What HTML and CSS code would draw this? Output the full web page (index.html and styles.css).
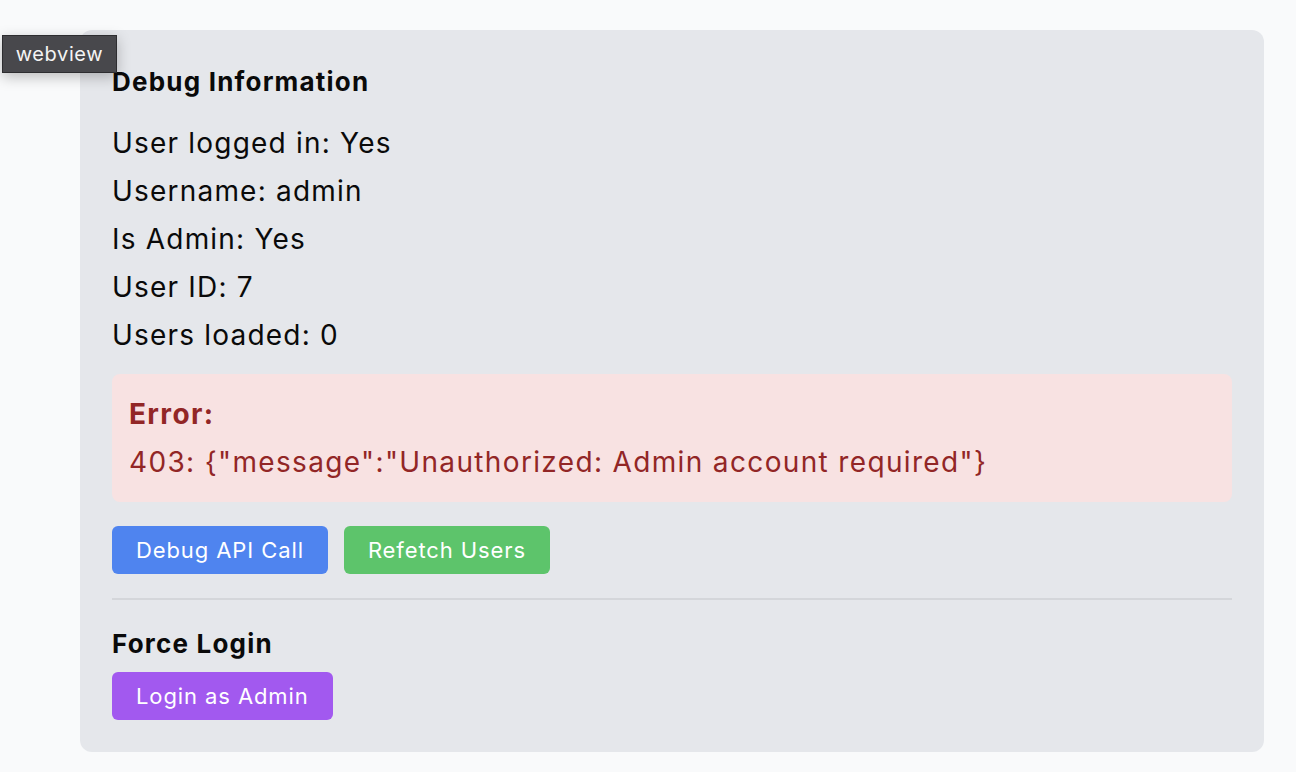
FILE: index.html
```html
<!DOCTYPE html>
<html>
<head>
<meta charset="utf-8">
<link rel="stylesheet" href="styles.css">
</head>
<body>
<div class="page">
  <div class="card">
    <h2 class="title">Debug Information</h2>
    <div class="info">
      <p>User logged in: Yes</p>
      <p>Username: admin</p>
      <p>Is Admin: Yes</p>
      <p>User ID: 7</p>
      <p>Users loaded: 0</p>
    </div>
    <div class="error">
      <p class="error-title">Error:</p>
      <p class="error-msg">403: {"message":"Unauthorized: Admin account required"}</p>
    </div>
    <div class="actions">
      <button class="btn btn-blue">Debug API Call</button>
      <button class="btn btn-green">Refetch Users</button>
    </div>
    <div class="force">
      <h2 class="title">Force Login</h2>
      <button class="btn btn-purple">Login as Admin</button>
    </div>
  </div>
</div>
<div class="tooltip">webview</div>
</body>
</html>
```
FILE: styles.css
```css
* { box-sizing: border-box; }
html, body { margin: 0; padding: 0; }
body {
  background: #f9fafb;
  font-family: Inter, "Noto Sans", sans-serif;
  color: #111;
}
.page {
  padding: 30px 32px 20px 80px;
}
.card {
  background: #e5e7eb;
  border-radius: 12px;
  padding: 32px 32px 32px 32px;
}
.title {
  margin: 0;
  font-size: 26px;
  font-weight: 700;
  line-height: 40px;
  letter-spacing: 1.2px;
  color: #0a0a0a;
}
.info {
  margin-top: 17px;
}
.info p {
  margin: 0;
  font-size: 28px;
  line-height: 48px;
  letter-spacing: 1.2px;
  color: #0a0a0a;
}
.error {
  margin-top: 15px;
  background: #f8e2e2;
  border-radius: 8px;
  padding: 16px 17px 16px 17px;
  color: #922626;
}
.error p { margin: 0; font-size: 28px; line-height: 48px; letter-spacing: 1.35px; }
.error-title { font-weight: 700; }
.actions {
  display: flex;
  gap: 16px;
  margin-top: 24px;
  padding-bottom: 24px;
  border-bottom: 2px solid #d4d6da;
}
.btn {
  font-family: Inter, "Noto Sans", sans-serif;
  font-size: 22px;
  letter-spacing: 0.9px;
  height: 48px;
  padding: 0 24px;
  border: none;
  border-radius: 6px;
  color: #fff;
}
.btn-blue { background: #4f84ef; }
.btn-green { background: #5dc46b; }
.btn-purple { background: #a259ef; }
.force {
  margin-top: 24px;
  display: flex;
  flex-direction: column;
  align-items: flex-start;
  gap: 8px;
}
.tooltip {
  position: absolute;
  left: 2px;
  top: 35px;
  width: 115px;
  height: 38px;
  background: #48484c;
  border: 1px solid #2d2d30;
  color: #f4f4f4;
  font-size: 20px;
  letter-spacing: 0.6px;
  display: flex;
  align-items: center;
  justify-content: center;
  box-shadow: 0 4px 14px rgba(0,0,0,0.25);
}
```
